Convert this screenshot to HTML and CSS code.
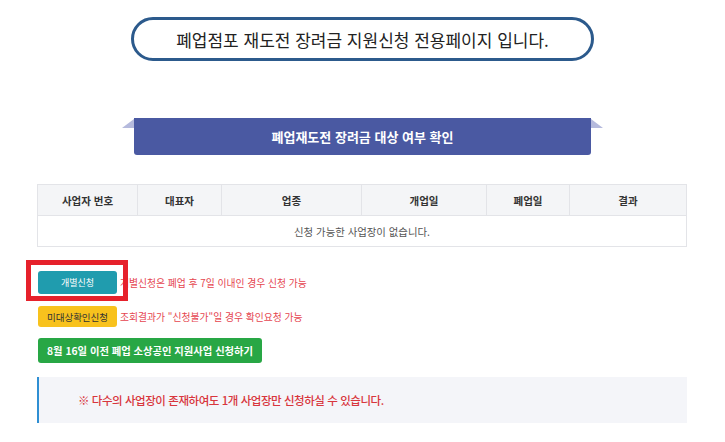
FILE: index.html
```html
<!DOCTYPE html>
<html lang="ko">
<head>
<meta charset="utf-8">
<link rel="stylesheet" href="styles.css">
</head>
<body>
<div class="page">
  <div class="pill">폐업점포 재도전 장려금 지원신청 전용페이지 입니다.</div>

  <div class="ribbon">폐업재도전 장려금 대상 여부 확인</div>

  <table class="result">
    <colgroup>
      <col class="c1"><col class="c2"><col class="c3"><col class="c4"><col class="c5"><col class="c6">
    </colgroup>
    <thead>
      <tr><th>사업자 번호</th><th>대표자</th><th>업종</th><th>개업일</th><th>폐업일</th><th>결과</th></tr>
    </thead>
    <tbody>
      <tr><td colspan="6">신청 가능한 사업장이 없습니다.</td></tr>
    </tbody>
  </table>

  <div class="actions">
    <div class="act-row">
      <span class="btn btn-teal">개별신청<span class="mark"></span></span>
      <span class="note">개별신청은 폐업 후 7일 이내인 경우 신청 가능</span>
    </div>
    <div class="act-row row-yellow">
      <span class="btn btn-yellow">미대상확인신청</span>
      <span class="note">조회결과가 "신청불가"일 경우 확인요청 가능</span>
    </div>
    <div class="act-row row-green">
      <span class="btn btn-green">8월 16일 이전 폐업 소상공인 지원사업 신청하기</span>
    </div>
  </div>

  <div class="notice">※ 다수의 사업장이 존재하여도 1개 사업장만 신청하실 수 있습니다.</div>
</div>
</body>
</html>
```
FILE: styles.css
```css
* { box-sizing: border-box; }
html, body { margin: 0; padding: 0; background: #fff; }
body {
  font-family: "Noto Sans CJK KR", "Noto Sans", sans-serif;
  color: #333;
  width: 725px;
  height: 442px;
  overflow: hidden;
}
.page {
  display: flex;
  flex-direction: column;
  padding-top: 17px;
}
.pill {
  align-self: center;
  width: 463px;
  height: 44px;
  border: 3px solid #2c5a8c;
  border-radius: 22px;
  display: flex;
  align-items: center;
  justify-content: center;
  font-size: 17px;
  color: #222;
}
.ribbon {
  position: relative;
  align-self: center;
  margin-top: 57px;
  width: 457px;
  height: 37px;
  background: #4a59a2;
  border-radius: 0 0 3px 3px;
  color: #fff;
  font-weight: bold;
  font-size: 13px;
  display: flex;
  align-items: center;
  justify-content: center;
}
.ribbon::before,
.ribbon::after {
  content: "";
  position: absolute;
  top: 1px;
  width: 0;
  height: 0;
  border-bottom: 9px solid #b5badd;
}
.ribbon::before {
  left: -12px;
  border-left: 12px solid transparent;
}
.ribbon::after {
  right: -12px;
  border-right: 12px solid transparent;
}
.result {
  margin-top: 29px;
  margin-left: 37px;
  width: 649px;
  border-collapse: collapse;
  table-layout: fixed;
  font-size: 10.5px;
}
.c1 { width: 100px; }
.c2 { width: 84px; }
.c3 { width: 140px; }
.c4 { width: 125px; }
.c5 { width: 83px; }
.c6 { width: 117px; }
.result th {
  height: 31px;
  background: #f4f5f7;
  border: 1px solid #e3e4e8;
  font-weight: bold;
  color: #333;
  padding: 0;
}
.result td {
  height: 31px;
  border: 1px solid #e3e4e8;
  text-align: center;
  color: #555;
  padding: 0;
  font-size: 10.4px;
}
.actions {
  margin-top: 24px;
  margin-left: 38px;
  display: flex;
  flex-direction: column;
}
.act-row {
  display: flex;
  align-items: center;
  gap: 3px;
}
.row-yellow { margin-top: 12px; }
.row-green { margin-top: 11px; }
.btn {
  position: relative;
  display: inline-flex;
  align-items: center;
  justify-content: center;
  border-radius: 3px;
  font-size: 9.5px;
}
.btn-teal {
  width: 79px;
  height: 23px;
  background: #209cae;
  color: #fff;
  font-size: 9px;
}
.btn-yellow {
  width: 79px;
  height: 21px;
  background: #f8c21d;
  color: #333;
}
.btn-green {
  height: 25px;
  padding: 0 9px;
  background: #28a745;
  color: #fff;
  font-weight: bold;
  font-size: 10.3px;
}
.mark {
  position: absolute;
  left: -12px;
  top: -11px;
  width: 102px;
  height: 41px;
  border: 5px solid #e6212b;
}
.note {
  color: #e5454f;
  font-size: 9.8px;
}
.notice {
  margin-top: 14px;
  margin-left: 37px;
  width: 650px;
  height: 46px;
  background: #f4f5f9;
  border-left: 2px solid #2f8fd3;
  display: flex;
  align-items: center;
  padding-left: 39px;
  color: #d8363d;
  font-size: 11.5px;
  letter-spacing: -0.45px;
  font-weight: 500;
}
```
